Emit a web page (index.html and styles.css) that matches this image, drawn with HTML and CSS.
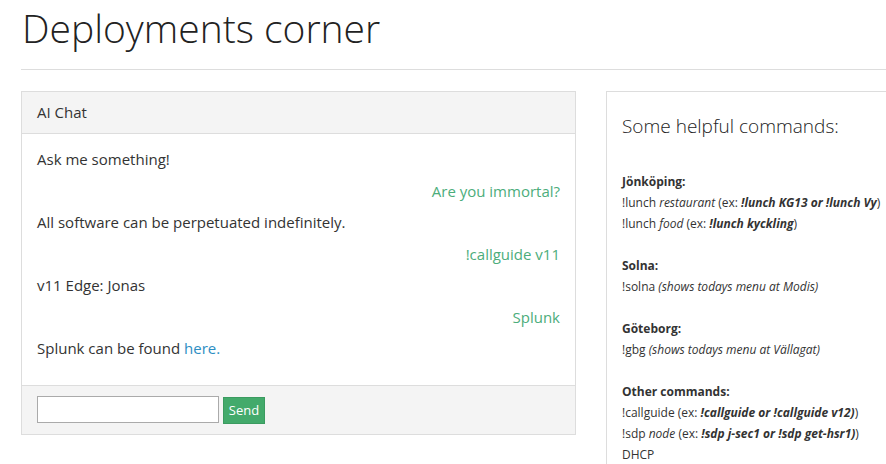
FILE: index.html
```html
<!DOCTYPE html>
<html>
<head>
<meta charset="utf-8">
<link rel="stylesheet" href="styles.css">
</head>
<body>
<div class="page">
  <h1 class="title">Deployments corner</h1>
  <hr class="rule">
  <div class="columns">
    <div class="chat">
      <div class="chat-head">AI Chat</div>
      <div class="chat-body">
        <div class="msg">Ask me something!</div>
        <div class="msg me">Are you immortal?</div>
        <div class="msg">All software can be perpetuated indefinitely.</div>
        <div class="msg me">!callguide v11</div>
        <div class="msg">v11 Edge: Jonas</div>
        <div class="msg me">Splunk</div>
        <div class="msg">Splunk can be found <a class="link" href="#">here.</a></div>
      </div>
      <div class="chat-foot">
        <input class="chat-input" type="text">
        <button class="send">Send</button>
      </div>
    </div>
    <div class="help">
      <h3 class="help-title">Some helpful commands:</h3>
      <div class="section">
        <div class="line"><b>Jönköping:</b></div>
        <div class="line">!lunch <i>restaurant</i> (ex: <b><i>!lunch KG13 or !lunch Vy</i></b>)</div>
        <div class="line">!lunch <i>food</i> (ex: <b><i>!lunch kyckling</i></b>)</div>
      </div>
      <div class="section">
        <div class="line"><b>Solna:</b></div>
        <div class="line">!solna <i>(shows todays menu at Modis)</i></div>
      </div>
      <div class="section">
        <div class="line"><b>Göteborg:</b></div>
        <div class="line">!gbg <i>(shows todays menu at Vällagat)</i></div>
      </div>
      <div class="section">
        <div class="line"><b>Other commands:</b></div>
        <div class="line">!callguide (ex: <b><i>!callguide or !callguide v12)</i></b>)</div>
        <div class="line">!sdp <i>node</i> (ex: <b><i>!sdp j-sec1 or !sdp get-hsr1)</i></b>)</div>
        <div class="line">DHCP</div>
      </div>
    </div>
  </div>
</div>
</body>
</html>
```

FILE: styles.css
```css
html, body {
  margin: 0;
  padding: 0;
  background: #fff;
  overflow: hidden;
}
body {
  font-family: "Open Sans", "DejaVu Sans", sans-serif;
  color: #333;
}
.page {
  padding-left: 21px;
  width: 900px;
}
.title {
  margin: 6px 0 0 0;
  font-size: 39px;
  font-weight: 300;
  line-height: 44px;
  color: #222;
  padding-left: 1px;
}
.rule {
  border: 0;
  border-top: 1px solid #ddd;
  margin: 19px 0 21px 0;
  height: 0;
}
.columns {
  display: flex;
  align-items: flex-start;
  gap: 30px;
}
.chat {
  width: 553px;
  border: 1px solid #ddd;
  flex: none;
}
.chat-head {
  background: #f4f4f4;
  border-bottom: 1px solid #ddd;
  padding: 10px 15px;
  font-size: 15px;
  line-height: 21px;
}
.chat-body {
  padding: 15px 15px 15px 15px;
}
.msg {
  font-size: 15px;
  line-height: 21.5px;
  margin-bottom: 10px;
}
.msg.me {
  text-align: right;
  color: #4cad7b;
}
.link {
  color: #2d8ec3;
  text-decoration: none;
}
.chat-foot {
  background: #f4f4f4;
  border-top: 1px solid #ddd;
  padding: 10px 15px;
  display: flex;
  align-items: flex-start;
  gap: 4px;
}
.chat-input {
  width: 182px;
  height: 27px;
  box-sizing: border-box;
  border: 1px solid #aaa;
  margin: 0;
  padding: 2px 4px;
  background: #fff;
}
.send {
  margin: 1px 0 0 0;
  height: 27px;
  width: 42px;
  box-sizing: border-box;
  background: #43aa6b;
  border: 1px solid #3b9b60;
  color: #fff;
  font-family: "Open Sans", sans-serif;
  font-size: 13px;
  padding: 0;
}
.help {
  width: 300px;
  flex: none;
  border: 1px solid #ddd;
  border-right: 0;
  padding: 0 0 0 15px;
  height: 380px;
}
.help-title {
  font-size: 19px;
  font-weight: 300;
  line-height: 28px;
  margin: 20px 0 31px 0;
  color: #222;
}
.section {
  margin-bottom: 21px;
}
.line {
  font-size: 12px;
  line-height: 21px;
  white-space: nowrap;
}
```
